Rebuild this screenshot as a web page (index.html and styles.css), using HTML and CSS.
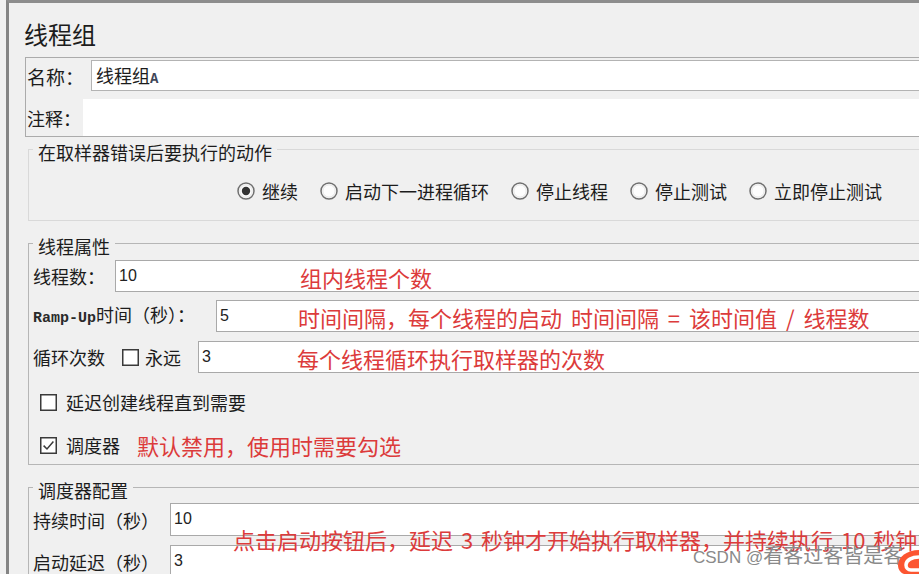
FILE: index.html
```html
<!DOCTYPE html>
<html lang="zh-CN">
<head>
<meta charset="utf-8">
<title>线程组</title>
<link rel="stylesheet" href="styles.css">
</head>
<body>
<div class="frame">
  <div class="title">线程组</div>

  <div class="namebox">
    <div class="nrow nrow-name">
      <span class="nlbl nlbl-name">名称：</span>
      <div class="nfield nfield-name">线程组<span class="mono-a">A</span></div>
    </div>
    <div class="nrow nrow-comment">
      <span class="nlbl nlbl-comment">注释：</span>
      <div class="nfield nfield-comment"></div>
    </div>
  </div>

  <fieldset class="group g-action">
    <legend>在取样器错误后要执行的动作</legend>
    <div class="radios">
      <span class="radio"><svg class="rb" width="18" height="18" viewBox="0 0 18 18"><circle cx="9" cy="9" r="8" fill="#fdfdfd" stroke="#707070" stroke-width="1.5"/><circle cx="9" cy="9" r="6.2" fill="none" stroke="#e4e4e4" stroke-width="1"/><circle cx="9" cy="9" r="4.2" fill="#333"/></svg>继续</span>
      <span class="radio"><svg class="rb" width="18" height="18" viewBox="0 0 18 18"><circle cx="9" cy="9" r="8" fill="#fdfdfd" stroke="#707070" stroke-width="1.5"/><circle cx="9" cy="9" r="6.2" fill="none" stroke="#e4e4e4" stroke-width="1"/></svg>启动下一进程循环</span>
      <span class="radio"><svg class="rb" width="18" height="18" viewBox="0 0 18 18"><circle cx="9" cy="9" r="8" fill="#fdfdfd" stroke="#707070" stroke-width="1.5"/><circle cx="9" cy="9" r="6.2" fill="none" stroke="#e4e4e4" stroke-width="1"/></svg>停止线程</span>
      <span class="radio"><svg class="rb" width="18" height="18" viewBox="0 0 18 18"><circle cx="9" cy="9" r="8" fill="#fdfdfd" stroke="#707070" stroke-width="1.5"/><circle cx="9" cy="9" r="6.2" fill="none" stroke="#e4e4e4" stroke-width="1"/></svg>停止测试</span>
      <span class="radio"><svg class="rb" width="18" height="18" viewBox="0 0 18 18"><circle cx="9" cy="9" r="8" fill="#fdfdfd" stroke="#707070" stroke-width="1.5"/><circle cx="9" cy="9" r="6.2" fill="none" stroke="#e4e4e4" stroke-width="1"/></svg>立即停止测试</span>
    </div>
  </fieldset>

  <fieldset class="group g-thread">
    <legend>线程属性</legend>
    <div class="row row-threads">
      <span class="lbl lbl-threads">线程数：</span>
      <div class="field">10</div>
    </div>
    <div class="row row-ramp">
      <span class="lbl lbl-ramp"><span class="mono">Ramp-Up</span>时间（秒）：</span>
      <div class="field">5</div>
    </div>
    <div class="row row-loop">
      <span class="lbl">循环次数</span>
      <svg class="cb cb-loop" width="17" height="17" viewBox="0 0 17 17"><rect x="0.75" y="0.75" width="15.5" height="15.5" fill="#fff" stroke="#3a3a3a" stroke-width="1.5"/></svg>
      <span class="lbl lbl-forever">永远</span>
      <div class="field field-loop">3</div>
    </div>
    <div class="crow crow-delay">
      <svg class="cb" width="17" height="17" viewBox="0 0 17 17"><rect x="0.75" y="0.75" width="15.5" height="15.5" fill="#fff" stroke="#3a3a3a" stroke-width="1.5"/></svg>
      <span class="ctext">延迟创建线程直到需要</span>
    </div>
    <div class="crow crow-sched">
      <svg class="cb" width="17" height="17" viewBox="0 0 17 17"><rect x="0.75" y="0.75" width="15.5" height="15.5" fill="#fff" stroke="#3a3a3a" stroke-width="1.5"/><path d="M3.6 8.6 L7 12 L13.4 4.6" fill="none" stroke="#3a3a3a" stroke-width="1.5"/></svg>
      <span class="ctext">调度器</span>
      <span class="note note-inline">默认禁用，使用时需要勾选</span>
    </div>
  </fieldset>

  <fieldset class="group g-sched">
    <legend>调度器配置</legend>
    <div class="row row-s1">
      <span class="lbl lbl-sched">持续时间（秒）</span>
      <div class="field">10</div>
    </div>
    <div class="row row-s2">
      <span class="lbl lbl-sched">启动延迟（秒）</span>
      <div class="field">3</div>
    </div>
  </fieldset>

  <span class="note note-threads">组内线程个数</span>
  <span class="note note-ramp">时间间隔，每个线程的启动 时间间隔 = 该时间值 / 线程数</span>
  <span class="note note-loop">每个线程循环执行取样器的次数</span>
  <span class="note note-sched">点击启动按钮后，延迟 3 秒钟才开始执行取样器，并持续执行 10 秒钟</span>

  <span class="watermark"><span class="wm-latin">CSDN @</span>看客过客皆是客</span>
  <svg class="logo" width="24" height="28" viewBox="0 0 24 28"><path d="M24 4 C12 4 3 11 3 19 C3 24 6 27 9 28 L24 28 Z" fill="#fc5531"/><path d="M24 11 C17 11 11 14 11 19 C11 22 13 24 16 24 L24 24" fill="none" stroke="#fff" stroke-width="3.5"/></svg>
</div>
</body>
</html>
```

FILE: styles.css
```css
html, body {
  margin: 0;
  padding: 0;
  overflow: hidden;
  background: #f0f0f0;
}

body {
  width: 919px;
  height: 574px;
  font-family: "Noto Sans CJK SC", "Microsoft YaHei", sans-serif;
  color: #1c1c1c;
}

.frame {
  position: relative;
  margin-left: 6px;
  width: 1000px;
  height: 700px;
  border-left: 3px solid #848484;
  border-top: 3px solid #8d8d8d;
}

.title {
  font-size: 24px;
  line-height: 30px;
  margin: 16px 0 8px 15px;
}

/* name / comment panel */
.namebox {
  margin-left: 16px;
  border: 1px solid #ababab;
  padding-left: 1px;
}

.nrow {
  display: flex;
  align-items: flex-start;
}

.nrow-name { height: 38px; }
.nrow-comment { height: 40px; }

.nlbl {
  flex: none;
  font-size: 19px;
  white-space: nowrap;
}

.nlbl-name { width: 64px; line-height: 38px; }
.nlbl-comment { width: 56px; line-height: 40px; padding-top: 2px; font-size: 18px; }

.nfield {
  flex: 1;
  background: #fff;
  box-sizing: border-box;
}

.nfield-name {
  margin-top: 2px;
  height: 31px;
  border: 1px solid #b3b3b3;
  padding-left: 4px;
  font-size: 18px;
  line-height: 29px;
}

.mono-a {
  font-family: "Liberation Mono", monospace;
  font-weight: bold;
  font-size: 14px;
  color: #3f4658;
}

.nfield-comment {
  margin-top: 3px;
  height: 37px;
}

/* fieldsets */
.group {
  margin: 0 0 0 19px;
  padding: 0 0 0 4px;
  border: 1px solid #b6b6b6;
  min-width: 0;
}

.group legend {
  padding: 6px 5px 0 5px;
  font-size: 18px;
  line-height: 18px;
}

.g-action {
  border-color: #d9d9d9;
  padding-top: 18px;
  padding-bottom: 17px;
}

.g-thread {
  margin-top: 10px;
  padding-top: 5px;
  padding-bottom: 7px;
}

.g-sched {
  margin-top: 10px;
  padding-top: 4px;
}

/* radios */
.radios {
  display: flex;
  gap: 22px;
  padding-left: 204px;
  height: 24px;
  align-items: center;
}

.radio {
  display: flex;
  align-items: center;
  gap: 7px;
  font-size: 18px;
  line-height: 24px;
}

.rb { flex: none; }

/* rows */
.row {
  display: flex;
  align-items: center;
  height: 32px;
}

.row-ramp { margin-top: 8px; }
.row-loop { margin-top: 9px; }
.row-s1 { height: 33px; }
.row-s2 { margin-top: 9px; height: 33px; }

.lbl {
  flex: none;
  font-size: 18px;
  line-height: 32px;
  white-space: nowrap;
}

.lbl-threads { width: 82px; }
.lbl-ramp { width: 183px; }
.lbl-sched { width: 137px; }
.lbl-forever { margin-left: 6px; }

.mono {
  font-family: "Liberation Mono", monospace;
  font-weight: bold;
  font-size: 15px;
  color: #2a2a2a;
}

.field {
  flex: 1;
  align-self: stretch;
  background: #fff;
  border: 1px solid #a9a9a9;
  box-sizing: border-box;
  padding-left: 3px;
  font-family: "Liberation Sans", Arial, sans-serif;
  font-size: 16px;
  line-height: 30px;
  color: #222;
}

.cb { flex: none; }
.cb-loop { margin-left: 17px; }
.field-loop { margin-left: 17px; }

.crow {
  display: flex;
  align-items: center;
  height: 24px;
  margin-left: 7px;
}

.crow-delay { margin-top: 17px; }
.crow-sched { margin-top: 19px; }

.ctext {
  margin-left: 9px;
  font-size: 18px;
  line-height: 24px;
}

/* annotations */
.note {
  color: #dc3b3b;
  font-size: 22px;
  line-height: 26px;
  white-space: nowrap;
}

.note-inline { margin-left: 17px; }

.note-threads,
.note-ramp,
.note-loop,
.note-sched {
  position: absolute;
}

.note-threads { left: 291px; top: 261px; }
.note-ramp { left: 289px; top: 301px; word-spacing: 4px; }
.note-loop { left: 288px; top: 342px; }
.note-sched { left: 224px; top: 523px; word-spacing: 3px; }

.watermark {
  position: absolute;
  left: 684px;
  top: 539px;
  font-size: 20px;
  line-height: 26px;
  color: #8a8a8a;
  white-space: nowrap;
}

.wm-latin {
  font-family: "Liberation Sans", Arial, sans-serif;
  font-size: 17px;
}

.logo {
  position: absolute;
  left: 886px;
  top: 543px;
}
```
